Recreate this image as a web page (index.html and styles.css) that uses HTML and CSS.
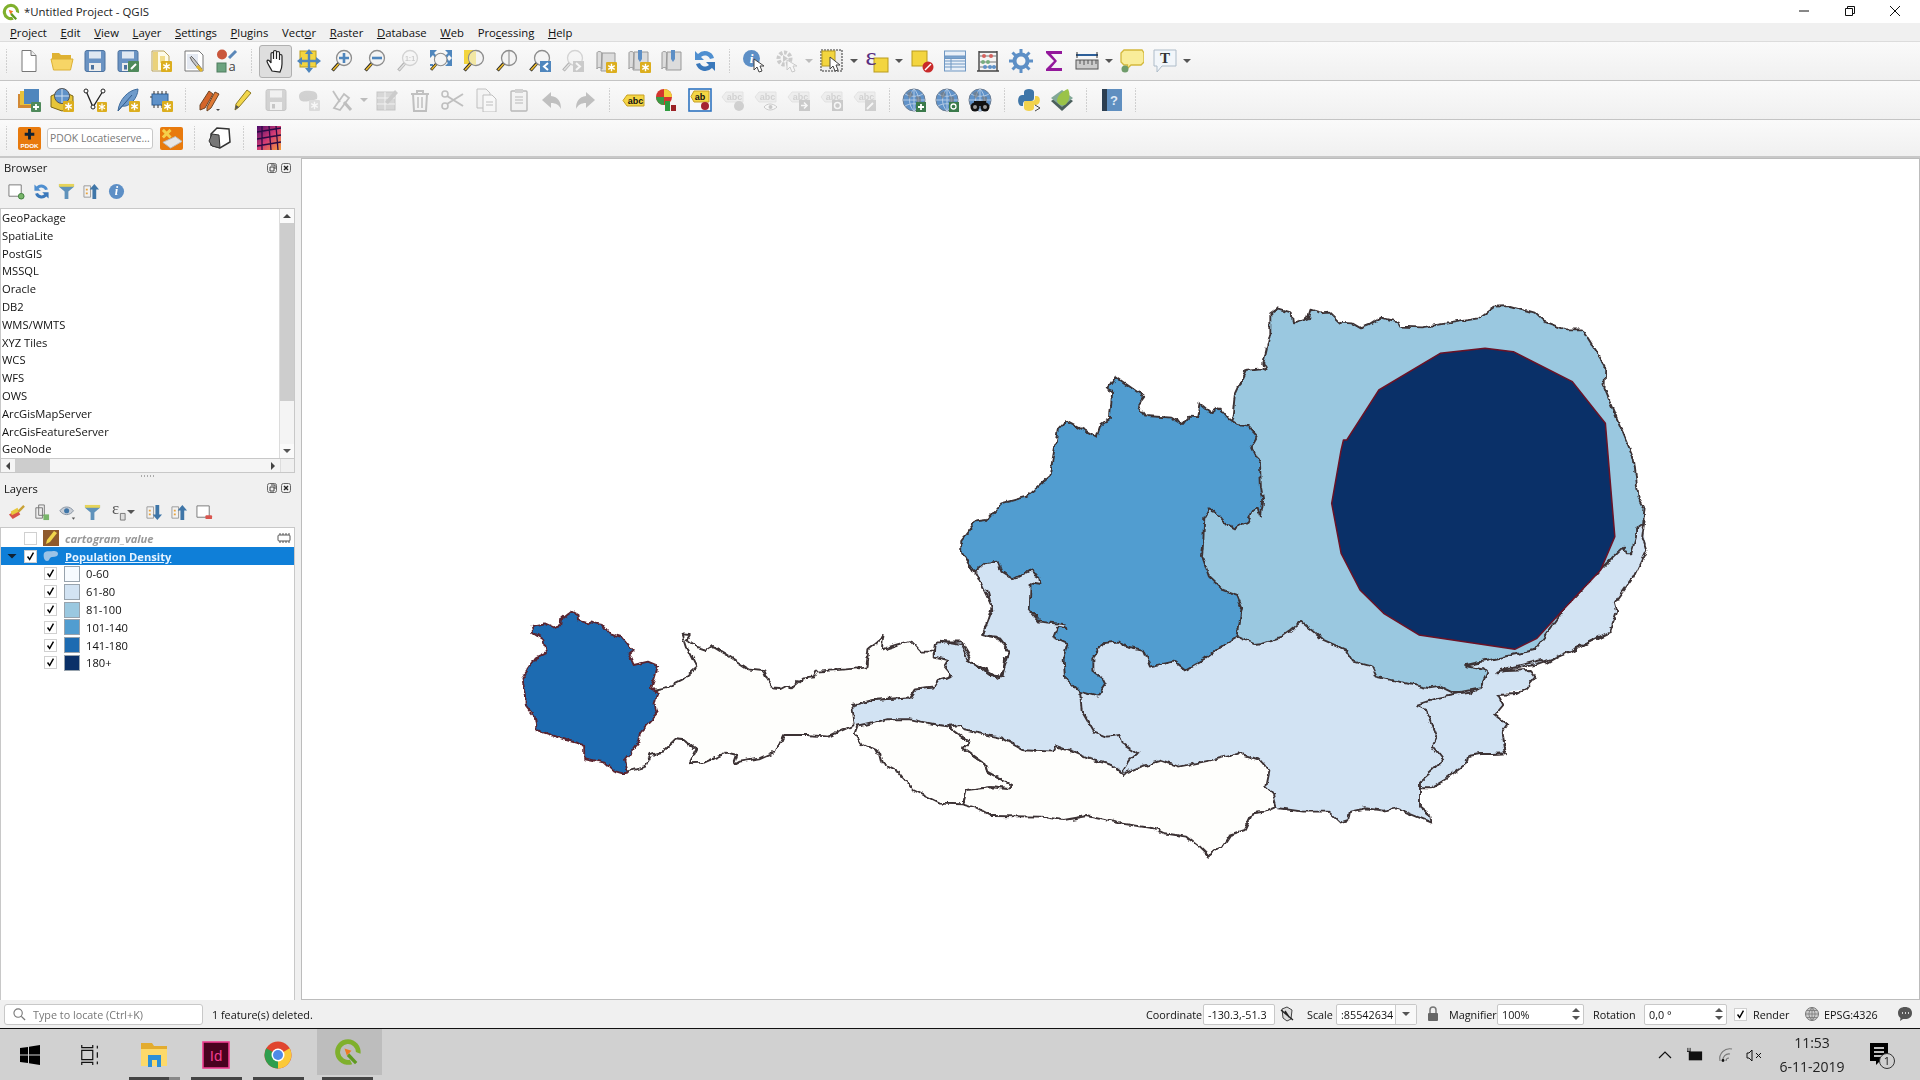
FILE: index.html
```html
<!DOCTYPE html>
<html lang="en">
<head>
<meta charset="utf-8">
<title>*Untitled Project - QGIS</title>
<link rel="stylesheet" href="styles.css">
</head>
<body>
<svg class="defs" xmlns="http://www.w3.org/2000/svg">
  <symbol id="star" viewBox="0 0 10 10"><rect width="10" height="10" rx="1" fill="#dcae1e"/><path d="M5 1.5v7M2 3.2l6 3.6M8 3.2l-6 3.6" stroke="#fff" stroke-width="1.3"/></symbol>
  <symbol id="mag" viewBox="0 0 24 24"><path d="M9 14 2.5 21.5" stroke="#222" stroke-width="3.4"/><path d="M8.5 15 3 21" stroke="#e9b82d" stroke-width="1.8"/><circle cx="14" cy="9" r="7.5" fill="#f4f4f4" stroke="#8d8d8d" stroke-width="1.3"/></symbol>
  <symbol id="qgis" viewBox="0 0 24 24"><path d="M12 1a11 11 0 1 0 3.600 21.400l-2-3.800A6.800 6.800 0 1 1 18.800 12l3.900 1.600A11 11 0 0 0 12 1z" fill="#7fb02c"/><path d="m13 13 7 7.500-2 2-7-7z" fill="#5f9a1f"/><path d="m9 9 6 2-4 4z" fill="#ee7a22"/></symbol>
  <symbol id="save" viewBox="0 0 24 24"><rect x="2" y="1.5" width="20" height="21" rx="2" fill="#6a93c3" stroke="#4d739f"/><rect x="6" y="2.5" width="12" height="7" fill="#dfe8f2"/><rect x="6" y="14" width="12" height="8" fill="#ececec"/><rect x="8" y="16" width="3" height="4.5" fill="#4d739f"/></symbol>
  <symbol id="hicon" viewBox="0 0 24 24"><path d="M8 22C6 18 3 14 3 12c1-2 3 0 4 2V5c0-2 2.500-2 2.500 0v5-7c0-2 3-2 3 0v7-6c0-2 3-2 3 0v7-4c0-2 2.500-2 2.500 0v8c0 4-1 6-2 8z" fill="#fff" stroke="#222" stroke-width="1.200"/></symbol>
  <symbol id="abc" viewBox="0 0 24 24"><path d="M5 7h17v11H5l-4-5.500z" fill="#f4d645" stroke="#c79f24"/><text x="13.500" y="16" class="abc">abc</text></symbol>
  <symbol id="abg" viewBox="0 0 24 24"><path d="M5 4h17v10H5l-4-5z" fill="#ddd" stroke="#bbb"/><text x="13.500" y="12" class="abc agr">abc</text></symbol>
  <symbol id="globe" viewBox="0 0 24 24"><circle cx="12" cy="12" r="11" fill="#5f92c9" stroke="#6c7d92"/><path d="M12 1v22M1 12h22M3 6c5 3 13 3 18 0M3 18c5-3 13-3 18 0M12 1c-6 6-6 16 0 22M12 1c6 6 6 16 0 22" fill="none" stroke="#b9cee6" stroke-width=".9"/><path d="M5 5l4-2 2 4-4 4zM14 8l5 1v5l-4 2z" fill="#777" opacity=".6"/></symbol>
  <symbol id="chk" viewBox="0 0 13 13"><path d="m3 6.500 2.500 3.500 4.500-8" fill="none" stroke="#000" stroke-width="1.700"/></symbol>
  <symbol id="arr" viewBox="0 0 8 6"><path d="M0 1h8L4 5z" fill="#555"/></symbol>
</svg>

<header class="title">
  <svg class="logo"><use href="#qgis"/></svg>
  <span>*Untitled Project - QGIS</span>
  <div class="winbtns">
    <svg class="wb" viewBox="0 0 12 12"><path d="M1 6h10" stroke="#111"/></svg>
    <svg class="wb" viewBox="0 0 12 12"><path d="M3.500 3V1.500h7v7H9M1.500 3.500h7v7h-7z" fill="none" stroke="#111"/></svg>
    <svg class="wb" viewBox="0 0 12 12"><path d="m1 1 10 10M11 1 1 11" stroke="#111"/></svg>
  </div>
</header>

<nav class="menu">
  <span><u>P</u>roject</span><span><u>E</u>dit</span><span><u>V</u>iew</span><span><u>L</u>ayer</span><span><u>S</u>ettings</span><span><u>P</u>lugins</span><span>Vect<u>o</u>r</span><span><u>R</u>aster</span><span><u>D</u>atabase</span><span><u>W</u>eb</span><span>Pro<u>c</u>essing</span><span><u>H</u>elp</span>
</nav>

<div class="tb">
  <i class="h h0"></i>
  <b class="b"><svg class="i" viewBox="0 0 24 24"><path d="M5 1.500h9l5 5v16H5z" fill="#fff" stroke="#777"/><path d="M14 1.500v5h5" fill="#eee" stroke="#777"/></svg></b>
  <b class="b"><svg class="i" viewBox="0 0 24 24"><path d="M2 4h7l2 2h10v5H2z" fill="#dfb233"/><path d="M1 10h22l-2.500 11h-17z" fill="#f7d566" stroke="#dcb034"/></svg></b>
  <b class="b"><svg class="i"><use href="#save"/></svg></b>
  <b class="b"><svg class="i" viewBox="0 0 24 24"><use href="#save"/><rect x="12" y="12" width="11" height="11" rx="1" fill="#4f8a5b"/><path d="m15 20 5-5" stroke="#fff" stroke-width="2"/></svg></b>
  <b class="b"><svg class="i" viewBox="0 0 24 24"><path d="M3 2h12l5 5v15H3z" fill="#fdfbe9" stroke="#b9a25a"/><path d="M4 3h5v18H4z" fill="#ead27a"/><path d="M11 7h5v7h-5z" fill="#f2dd8b"/><use href="#star" x="12" y="12" width="11" height="11"/></svg></b>
  <b class="b"><svg class="i" viewBox="0 0 24 24"><path d="M3 2h14l4 4v16H3z" fill="#fff" stroke="#777"/><path d="M5 5h11v15H5z" fill="#e4e9f2"/><path d="m9 7 3 3 8 10-2 2-8-10-2-4" fill="#c9c9c9" stroke="#666"/><path d="m15 17 5 5" stroke="#e3b72a" stroke-width="3"/></svg></b>
  <b class="b"><svg class="i vis" viewBox="0 0 24 24"><circle cx="7" cy="5.500" r="5" fill="#c9563b"/><path d="m14 9 7-7" stroke="#5b87b8" stroke-width="3"/><rect x="2" y="14" width="9" height="9" fill="#6ca37f" stroke="#4f7d5f"/><text x="17" y="22" class="stya">a</text></svg></b>
  <i class="h"></i>
  <b class="b act"><svg class="i"><use href="#hicon"/></svg></b>
  <b class="b"><svg class="i" viewBox="0 0 24 24"><rect x="3" y="2" width="16" height="16" fill="#f3d53f" stroke="#b99b1f"/><path d="m12 0 4 5H8zM12 24l-4-5h8zM0 12l5-4v8zM24 12l-5 4V8z" fill="#4f86bd"/><path d="M12 4v16M4 12h16" stroke="#4f86bd" stroke-width="2.400"/></svg></b>
  <b class="b"><svg class="i" viewBox="0 0 24 24"><use href="#mag"/><path d="M14 4v10M9 9h10" stroke="#4f86bd" stroke-width="2.600"/></svg></b>
  <b class="b"><svg class="i" viewBox="0 0 24 24"><use href="#mag"/><path d="M9 9h10" stroke="#4f86bd" stroke-width="2.600"/></svg></b>
  <b class="b dis"><svg class="i" viewBox="0 0 24 24"><use href="#mag"/><text x="14" y="12" class="one">1:1</text></svg></b>
  <b class="b"><svg class="i" viewBox="0 0 24 24"><path d="M1 1h7L5 4l3 3-2 2-2-3-3 3zM23 1h-7l3 3-3 3 2 2 2-3 3 3zM23 17h-7l3-3-3-3 2-2 2 3 3-3z" fill="#4f86bd"/><path d="M1 16h3" stroke="#4f86bd" stroke-width="2"/><use href="#mag" x="0" y="3" width="20" height="20"/></svg></b>
  <b class="b"><svg class="i" viewBox="0 0 24 24"><rect x="2" y="1" width="11" height="14" fill="#f3d53f"/><use href="#mag"/><path d="M14 2a7 7 0 0 0 0 14z" fill="#f2e7a4"/></svg></b>
  <b class="b"><svg class="i" viewBox="0 0 24 24"><use href="#mag"/><path d="M14 1.500v15" stroke="#888"/></svg></b>
  <b class="b"><svg class="i" viewBox="0 0 24 24"><use href="#mag"/><rect x="12" y="12" width="11" height="11" fill="#4f86bd"/><path d="m20 14-4 3.500 4 3.500" fill="none" stroke="#fff" stroke-width="2"/></svg></b>
  <b class="b dis"><svg class="i" viewBox="0 0 24 24"><use href="#mag"/><rect x="12" y="12" width="11" height="11" fill="#777"/><path d="m15 14 4 3.500-4 3.500" fill="none" stroke="#fff" stroke-width="2"/></svg></b>
  <b class="b"><svg class="i" viewBox="0 0 24 24"><path d="M3 4c0-2 4-2 5 0v16c-1-2-5-2-5 0zM8 4h13v18H7z" fill="#dcdcdc" stroke="#999"/><use href="#star" x="12" y="13" width="11" height="11"/></svg></b>
  <b class="b"><svg class="i" viewBox="0 0 24 24"><path d="M2 4c0-2 4-2 5 0v16c-1-2-5-2-5 0zM7 3h14v18H6z" fill="#dcdcdc" stroke="#999"/><path d="M11 1h4v9l-2 3-2-3z" fill="#5d8fc6"/><use href="#star" x="13" y="13" width="11" height="11"/></svg></b>
  <b class="b"><svg class="i" viewBox="0 0 24 24"><path d="M2 4c0-2 4-2 5 0v16c-1-2-5-2-5 0zM7 3h14v18H6z" fill="#dcdcdc" stroke="#999"/><path d="M11 1h4v9l-2 3-2-3z" fill="#5d8fc6"/></svg></b>
  <b class="b"><svg class="i" viewBox="0 0 24 24"><path d="M21 9a9.500 9.500 0 0 0-16-4L2 2v9h9L8 8a5.500 5.500 0 0 1 9 2z" fill="#4f8fd0"/><path d="M3 15a9.500 9.500 0 0 0 16 4l3 3v-9h-9l3 3a5.500 5.500 0 0 1-9-2z" fill="#3a78bb"/></svg></b>
  <i class="h"></i>
  <b class="b"><svg class="i" viewBox="0 0 24 24"><circle cx="9.500" cy="9.500" r="8.500" fill="#5d8fc6"/><text x="9.500" y="14" class="info">i</text><path d="m12 10 0 11 3-3 2 5 3-1-2-5h4z" fill="#fff" stroke="#444"/></svg></b>
  <b class="b dis"><svg class="i" viewBox="0 0 24 24"><circle cx="9.500" cy="9.500" r="6" fill="none" stroke="#777" stroke-width="4" stroke-dasharray="3 1.500"/><path d="m8 6 5 3.500-5 3.500z" fill="#777"/><path d="m12 11 0 10 3-3 2 5 3-1-2-5h4z" fill="#fff" stroke="#777"/></svg></b>
  <b class="ar"><svg class="a dim"><use href="#arr"/></svg></b>
  <b class="b"><svg class="i" viewBox="0 0 24 24"><rect x="1" y="1" width="21" height="21" fill="#eee" stroke="#333" stroke-dasharray="2 1"/><rect x="2" y="2" width="13" height="15" fill="#f3d53f" stroke="#b99b1f"/><path d="m10 8 0 12 3-3 2 5 3-1-2-5h4z" fill="#fff" stroke="#444"/></svg></b>
  <b class="ar"><svg class="a"><use href="#arr"/></svg></b>
  <b class="b"><svg class="i vis" viewBox="0 0 24 24"><rect x="9" y="9" width="14" height="14" fill="#f3d53f" stroke="#b99b1f"/><text x="6" y="16" class="eps">ε</text></svg></b>
  <b class="ar"><svg class="a"><use href="#arr"/></svg></b>
  <b class="b"><svg class="i" viewBox="0 0 24 24"><rect x="2" y="2" width="15" height="15" fill="#f3d53f" stroke="#b99b1f"/><circle cx="18" cy="18" r="5.500" fill="#c92a2a"/><path d="m15 21 6-6" stroke="#fff" stroke-width="1.500"/></svg></b>
  <b class="b"><svg class="i" viewBox="0 0 24 24"><rect x="1.500" y="2" width="21" height="20" fill="#e9f0f8" stroke="#6f97c2"/><path d="M2 7h20v2.500H2zM2 12h20M2 15h20M2 18h20M8 9v12" stroke="#6f97c2" fill="#7aa3cf"/></svg></b>
  <b class="b"><svg class="i" viewBox="0 0 24 24"><path d="M3 2v20M21 2v20M1 22h22M3 3h18" stroke="#444" stroke-width="1.400"/><path d="M3 7h18M3 13h18M3 18h18" stroke="#777"/><g fill="#d6625e"><circle cx="8" cy="7" r="2"/><circle cx="15" cy="7" r="2"/></g><g fill="#76ad7f"><circle cx="7" cy="13" r="2"/><circle cx="12" cy="13" r="2"/></g><g fill="#5f92c9"><circle cx="9" cy="18" r="2"/><circle cx="14" cy="18" r="2"/><circle cx="18" cy="18" r="2"/></g></svg></b>
  <b class="b"><svg class="i" viewBox="0 0 24 24"><circle cx="12" cy="12" r="6.500" fill="none" stroke="#5d8fc6" stroke-width="4"/><path d="M12 0v5M12 19v5M0 12h5M19 12h5M3.500 3.500l4 4M16.500 16.500l4 4M20.500 3.500l-4 4M7.500 16.500l-4 4" stroke="#5d8fc6" stroke-width="3"/></svg></b>
  <b class="b"><svg class="i" viewBox="0 0 24 24"><path d="M20 5V2H4v2l8 8-8 8v2h16v-3H9l6-7-6-7z" fill="#93189b"/></svg></b>
  <b class="b"><svg class="i" viewBox="0 0 24 24"><path d="M1 6h22" stroke="#2d5f99" stroke-width="2"/><path d="M2 3v6M22 3v6" stroke="#333"/><rect x="1" y="11" width="22" height="9" fill="#ccc" stroke="#555"/><path d="M5 11v4M9 11v5M13 11v4M17 11v5M21 11v4" stroke="#555"/></svg></b>
  <b class="ar"><svg class="a"><use href="#arr"/></svg></b>
  <b class="b"><svg class="i" viewBox="0 0 24 24"><path d="M4 1h18l2 3v9l-3 3H11l-4 4 .5-4H4l-3-3V4z" fill="#f9ed9a" stroke="#d3b83c" stroke-width="1.300"/><circle cx="5" cy="20" r="3.500" fill="#6f9c6b"/></svg></b>
  <b class="b"><svg class="i" viewBox="0 0 24 24"><path d="M1 1h22v16H9l-5 6v-6H1z" fill="#f2f6fa" stroke="#aebcc9"/><text x="12" y="14" class="tt">T</text></svg></b>
  <b class="ar"><svg class="a"><use href="#arr"/></svg></b>
</div>

<div class="tb">
  <i class="h h0"></i>
  <b class="b"><svg class="i" viewBox="0 0 24 24"><path d="M1 6h13v14H1z" fill="#d28934"/><path d="M3 3h13v14H3z" fill="#e8c23a"/><rect x="7" y="1" width="15" height="15" fill="#4f86bd"/><rect x="14" y="14" width="10" height="10" rx="1" fill="#4f8a5b"/><path d="M19 16v6M16 19h6" stroke="#fff" stroke-width="1.800"/></svg></b>
  <b class="b"><svg class="i" viewBox="0 0 24 24"><path d="M1 8 12 3l11 5v11l-11 4-11-4z" fill="#e6c538" stroke="#7a6515"/><circle cx="12" cy="8" r="7.500" fill="#5f92c9" stroke="#555"/><path d="M5 8h14M12 1v14" stroke="#cfe0f2"/><use href="#star" x="13" y="13" width="11" height="11"/></svg></b>
  <b class="b"><svg class="i" viewBox="0 0 24 24"><path d="M3 3 10 19 20 3" fill="none" stroke="#222" stroke-width="1.300"/><g fill="#fff" stroke="#222"><circle cx="3" cy="3" r="2"/><circle cx="10" cy="19" r="2"/><circle cx="20" cy="3" r="2"/></g><use href="#star" x="14" y="14" width="10" height="10"/></svg></b>
  <b class="b"><svg class="i" viewBox="0 0 24 24"><path d="M2 23C3 12 12 2 22 1c0 9-9 19-16 17z" fill="#6f9bcb" stroke="#3f6c9d"/><path d="M2 23 16 7" stroke="#345d8b"/><use href="#star" x="13" y="13" width="11" height="11"/></svg></b>
  <b class="b"><svg class="i" viewBox="0 0 24 24"><rect x="3" y="6" width="16" height="11" fill="#5f92c9" stroke="#2f5f94"/><path d="M5 3v3M9 3v3M13 3v3M17 3v3M5 17v3M9 17v3M13 17v3M1 9h2" stroke="#333"/><use href="#star" x="13" y="13" width="11" height="11"/></svg></b>
  <i class="h"></i>
  <b class="b"><svg class="i" viewBox="0 0 24 24"><path d="m2 17 9-14 4 3-8 14-5 2z" fill="#d4652a" stroke="#6f4626"/><path d="m9 19 8-15 4 2-8 14-4 3z" fill="#e07a35" stroke="#6f4626"/><path d="m18 21h4l-2 2z" fill="#444"/></svg></b>
  <b class="b"><svg class="i" viewBox="0 0 24 24"><path d="m4 22 1-6L16 2l4 3L8 19z" fill="#f2d64a" stroke="#8f7b23"/><path d="m4 22 1-5 3 2z" fill="#555"/></svg></b>
  <b class="b dis"><svg class="i"><use href="#save"/></svg></b>
  <b class="b dis"><svg class="i" viewBox="0 0 24 24"><path d="M2 8c0-5 7-6 12-5 6 0 7 4 6 8l-6 2c-4 0-12 3-12-5z" fill="#888"/><use href="#star" x="12" y="12" width="11" height="11"/></svg></b>
  <b class="b dis"><svg class="i" viewBox="0 0 24 24"><path d="M3 3 10 14M4 20 14 6l5 4-9 12z" fill="none" stroke="#555" stroke-width="1.800"/><path d="m14 14 7 8" stroke="#555" stroke-width="3"/></svg></b>
  <b class="ar"><svg class="a dim"><use href="#arr"/></svg></b>
  <b class="b dis"><svg class="i" viewBox="0 0 24 24"><rect x="2" y="4" width="18" height="18" fill="#999" stroke="#666"/><path d="M2 10h18M2 16h18M10 4v18" stroke="#eee"/><path d="m10 14 10-12 3 3-10 11z" fill="#777"/></svg></b>
  <b class="b dis"><svg class="i" viewBox="0 0 24 24"><path d="M3 6h18M9 6V3h6v3M5 6l1 17h12l1-17" fill="none" stroke="#804d40" stroke-width="2"/><path d="M10 9v11M14 9v11" stroke="#804d40" stroke-width="1.500"/></svg></b>
  <b class="b dis"><svg class="i" viewBox="0 0 24 24"><circle cx="4" cy="6" r="3" fill="none" stroke="#555" stroke-width="1.600"/><circle cx="4" cy="18" r="3" fill="none" stroke="#555" stroke-width="1.600"/><path d="m6 8 16 10M6 16 22 6" stroke="#555" stroke-width="2"/></svg></b>
  <b class="b dis"><svg class="i" viewBox="0 0 24 24"><path d="M3 1h9l4 4v15H3z" fill="#eee" stroke="#555"/><path d="M9 7h9l4 4v13H9z" fill="#fff" stroke="#555"/><path d="M12 14h7M12 17h7" stroke="#555"/></svg></b>
  <b class="b dis"><svg class="i" viewBox="0 0 24 24"><rect x="4" y="3" width="16" height="20" rx="1" fill="#eee" stroke="#444" stroke-width="1.400"/><rect x="8" y="1" width="8" height="4" fill="#888"/><path d="M8 9h8M8 12h8M8 15h8" stroke="#444"/></svg></b>
  <b class="b dis"><svg class="i" viewBox="0 0 24 24"><path d="M11 4 2 12l9 8v-5c5 0 8 2 10 6 0-8-3-12-10-13z" fill="#555"/></svg></b>
  <b class="b dis"><svg class="i" viewBox="0 0 24 24"><path d="m13 4 9 8-9 8v-5c-5 0-8 2-10 6 0-8 3-12 10-13z" fill="#555"/></svg></b>
  <i class="h"></i>
  <b class="b"><svg class="i"><use href="#abc"/></svg></b>
  <b class="b"><svg class="i" viewBox="0 0 24 24"><circle cx="9" cy="9" r="8" fill="#d4362f"/><path d="M9 9V1a8 8 0 0 1 8 8z" fill="#f2d13b"/><path d="M9 9H1a8 8 0 0 0 8 8z" fill="#3b9a45"/><rect x="10" y="13" width="5" height="10" fill="#2f9b3f"/><rect x="16" y="17" width="5" height="6" fill="#9b2226"/></svg></b>
  <b class="b"><svg class="i" viewBox="0 0 24 24"><rect x="1" y="1" width="22" height="22" fill="#f8f8f8" stroke="#2f74c0" stroke-width="1.600"/><path d="M6 3h15v11H6l-3-5.500z" fill="#f4d645" stroke="#c79f24"/><text x="12" y="12" class="abc">ab</text><circle cx="17" cy="18" r="4" fill="#a52330"/></svg></b>
  <b class="b dis"><svg class="i" viewBox="0 0 24 24"><use href="#abg"/><circle cx="18" cy="18" r="5" fill="#888"/></svg></b>
  <b class="b dis"><svg class="i" viewBox="0 0 24 24"><use href="#abg"/><path d="M10 19c3-4 9-4 13 0-4 4-10 4-13 0z" fill="#fff" stroke="#777"/><circle cx="16.500" cy="19" r="2" fill="#777"/></svg></b>
  <b class="b dis"><svg class="i" viewBox="0 0 24 24"><use href="#abg"/><rect x="12" y="12" width="11" height="11" fill="#777"/><path d="M14 17.500h5M17 14.500l3 3-3 3" fill="none" stroke="#fff" stroke-width="1.500"/></svg></b>
  <b class="b dis"><svg class="i" viewBox="0 0 24 24"><use href="#abg"/><rect x="12" y="12" width="11" height="11" fill="#777"/><circle cx="17.500" cy="17.500" r="3" fill="none" stroke="#fff" stroke-width="1.500"/></svg></b>
  <b class="b dis"><svg class="i" viewBox="0 0 24 24"><use href="#abg"/><rect x="12" y="12" width="11" height="11" fill="#888"/><path d="m14 21 6-6" stroke="#fff" stroke-width="1.800"/></svg></b>
  <i class="h"></i>
  <b class="b"><svg class="i" viewBox="0 0 24 24"><use href="#globe"/><rect x="14" y="14" width="10" height="10" fill="#3b7a4b"/><path d="M19 16v6M16 19h6" stroke="#fff" stroke-width="1.800"/></svg></b>
  <b class="b"><svg class="i" viewBox="0 0 24 24"><use href="#globe"/><rect x="14" y="14" width="10" height="10" fill="#3b7a4b"/><circle cx="18.500" cy="18.500" r="2.500" fill="none" stroke="#fff" stroke-width="1.300"/></svg></b>
  <b class="b"><svg class="i" viewBox="0 0 24 24"><use href="#globe"/><circle cx="7" cy="19" r="4.500" fill="#111"/><circle cx="17" cy="19" r="4.500" fill="#111"/><rect x="6" y="13" width="12" height="5" fill="#111"/><circle cx="7" cy="19" r="2" fill="#999"/><circle cx="17" cy="19" r="2" fill="#999"/></svg></b>
  <i class="h"></i>
  <b class="b"><svg class="i" viewBox="0 0 24 24"><path d="M7 7V4c0-4 10-4 10 0v6c0 2-1 3-3 3H9c-2 0-3 1-3 3v2H4c-4-1-4-11 1-11z" fill="#3f76a8"/><path d="M17 17v3c0 4-10 4-10 0v-5c0-2 1-2 3-2h5c2 0 3-1 3-3V8h2c4 0 4 9-1 9z" fill="#f2d24c"/><path d="m18 17 5 3-5 3" fill="none" stroke="#444"/></svg></b>
  <b class="b"><svg class="i" viewBox="0 0 24 24"><path d="M1 13 12 6l11 7-11 10z" fill="#4b5f5c"/><path d="M1 10 12 2l11 8-11 9z" fill="#82a898"/><path d="M7 13c0-6 6-10 11-12 3 6 1 13-3 16-3 1-7 0-8-4z" fill="#9ac348"/></svg></b>
  <i class="h"></i>
  <b class="b"><svg class="i" viewBox="0 0 24 24"><rect x="3" y="1" width="20" height="22" fill="#5f8fc0"/><rect x="3" y="1" width="5" height="22" fill="#2c3e50"/><text x="15" y="17" class="help">?</text></svg></b>
  <i class="h"></i>
</div>

<div class="tb tb3">
  <i class="h h0"></i>
  <b class="oi"><svg class="oic" viewBox="0 0 24 24"><path d="M12 2v11M7 7.500h10" stroke="#123" stroke-width="3"/><text x="12" y="21.500" class="pdok">PDOK</text></svg></b>
  <span class="pdokin">PDOK Locatieserve...</span>
  <b class="oi oi2"><svg class="oic" viewBox="0 0 24 24"><path d="M3 16 16 10l7 5-12 7z" fill="#e6e6e6" stroke="#bbb"/><path d="m3 3 8 8M11 3 3 11" stroke="#f5d04a" stroke-width="3"/></svg></b>
  <i class="h h3"></i>
  <b class="b"><svg class="i" viewBox="0 0 24 24"><path d="m4 8 6-6 12 1 1 13-10 6-9-3z" fill="#fff" stroke="#333" stroke-width="1.500"/><path d="M2 15 5 8l7 1 1 13-8-2z" fill="#777" stroke="#333"/></svg></b>
  <i class="h h3b"></i>
  <svg class="rast" viewBox="0 0 24 24"><defs><linearGradient id="rg" x1="0" y1="0" x2="1" y2="1"><stop offset="0" stop-color="#4b0a6b"/><stop offset=".5" stop-color="#d33a75"/><stop offset="1" stop-color="#f6a03a"/></linearGradient></defs><rect width="24" height="24" fill="url(#rg)"/><path d="M0 6 24 2M0 13l24-4M0 20l24-4M5 0v24M12 0l2 24M19 0l2 24" stroke="#2a0b45" stroke-width="1.300"/></svg>
</div>

<main class="main">
  <aside class="dock">
    <div class="dh"><span>Browser</span><span class="dbtns"><svg class="db" viewBox="0 0 10 10"><rect x=".5" y=".5" width="9" height="9" rx="2" fill="none" stroke="#666"/><path d="M3 4h4v4H3zM4 2h4v4" fill="none" stroke="#444"/></svg><svg class="db" viewBox="0 0 10 10"><rect x=".5" y=".5" width="9" height="9" rx="2" fill="none" stroke="#666"/><path d="m3 3 4 4M7 3 3 7" stroke="#222" stroke-width="1.400"/></svg></span></div>
    <div class="dt">
      <svg class="di" viewBox="0 0 18 18"><path d="M1 2h13v12H1z" fill="#fff" stroke="#777"/><circle cx="14" cy="14" r="3" fill="#78b56a" stroke="#3e7d3c"/></svg>
      <svg class="di" viewBox="0 0 24 24"><path d="M21 9a9.500 9.500 0 0 0-16-4L2 2v9h9L8 8a5.500 5.500 0 0 1 9 2z" fill="#4f8fd0"/><path d="M3 15a9.500 9.500 0 0 0 16 4l3 3v-9h-9l3 3a5.500 5.500 0 0 1-9-2z" fill="#3a78bb"/></svg>
      <svg class="di" viewBox="0 0 18 18"><path d="M1 1h16v3l-6 5v8H7V9L1 4z" fill="#5f92bb"/><path d="M1 1h16v3H1z" fill="#e6d45a"/></svg>
      <svg class="di" viewBox="0 0 18 18"><path d="M1 3h7v12H1z" fill="#f2f2f2" stroke="#999"/><path d="M3 6h2v2H3zM3 10h2v2H3z" fill="#e8a23a"/><path d="M12 1 17 7h-3v10h-4V7H7z" fill="#3f76a8"/></svg>
      <svg class="di" viewBox="0 0 18 18"><circle cx="9" cy="9" r="8" fill="#5d8fc6"/><text x="9" y="13" class="info inf2">i</text></svg>
    </div>
    <div class="list">
      <div class="rows">
        <div class="r">GeoPackage</div><div class="r">SpatiaLite</div><div class="r">PostGIS</div><div class="r">MSSQL</div><div class="r">Oracle</div><div class="r">DB2</div><div class="r">WMS/WMTS</div><div class="r">XYZ Tiles</div><div class="r">WCS</div><div class="r">WFS</div><div class="r">OWS</div><div class="r">ArcGisMapServer</div><div class="r">ArcGisFeatureServer</div><div class="r">GeoNode</div>
      </div>
      <div class="vs"><i class="sb sa"><svg class="a" viewBox="0 0 8 6"><path d="M0 5h8L4 1z" fill="#444"/></svg></i><i class="thumb"></i><i class="track"></i><i class="sb"><svg class="a"><use href="#arr"/></svg></i></div>
    </div>
    <div class="hs"><i class="sb2"><svg class="a2" viewBox="0 0 6 8"><path d="M5 0v8L1 4z" fill="#444"/></svg></i><i class="hthumb"></i><i class="htrack"></i><i class="sb2"><svg class="a2" viewBox="0 0 6 8"><path d="M1 0v8l4-4z" fill="#444"/></svg></i><i class="corner"></i></div>
    <div class="split"><i class="gr"></i></div>
    <div class="dh dh2"><span>Layers</span><span class="dbtns"><svg class="db" viewBox="0 0 10 10"><rect x=".5" y=".5" width="9" height="9" rx="2" fill="none" stroke="#666"/><path d="M3 4h4v4H3zM4 2h4v4" fill="none" stroke="#444"/></svg><svg class="db" viewBox="0 0 10 10"><rect x=".5" y=".5" width="9" height="9" rx="2" fill="none" stroke="#666"/><path d="m3 3 4 4M7 3 3 7" stroke="#222" stroke-width="1.400"/></svg></span></div>
    <div class="dt dt2">
      <svg class="di" viewBox="0 0 18 18"><path d="m1 11 9-5 3 5-8 5z" fill="#d8524a"/><path d="m3 8 7-4 2 4-8 4z" fill="#e9c93e"/><path d="m11 8 6-6" stroke="#c9a236" stroke-width="2.500"/></svg>
      <svg class="di" viewBox="0 0 18 18"><path d="M3 4h7v11H3zM6 1h6v11H6z" fill="#eee" stroke="#777"/><rect x="11" y="11" width="6" height="6" fill="#78b56a"/></svg>
      <svg class="di" viewBox="0 0 20 18"><path d="M1 7c4-6 12-6 16 0-4 6-12 6-16 0z" fill="#c9ced6" stroke="#7d8a99"/><circle cx="9" cy="7" r="3" fill="#3f76a8"/><path d="m15 15 4 0-2 2.500z" fill="#555"/></svg>
      <svg class="di" viewBox="0 0 18 18"><path d="M1 1h16v3l-6 5v8H7V9L1 4z" fill="#5f92bb"/><path d="M1 1h16v3H1z" fill="#e6d45a"/></svg>
      <span class="dex"><svg class="di vis" viewBox="0 0 18 18"><text x="6" y="11" class="eps eps2">ε</text><path d="M11 10h5v7h-5z" fill="#ddd" stroke="#777"/></svg><svg class="a"><use href="#arr"/></svg></span>
      <svg class="di" viewBox="0 0 18 18"><path d="M1 3h7v12H1z" fill="#f2f2f2" stroke="#999"/><path d="M3 6h2v2H3zM3 10h2v2H3z" fill="#e8a23a"/><path d="M12 17 17 11h-3V1h-4v10H7z" fill="#3f76a8"/></svg>
      <svg class="di" viewBox="0 0 18 18"><path d="M1 3h7v12H1z" fill="#f2f2f2" stroke="#999"/><path d="M3 6h2v2H3zM3 10h2v2H3z" fill="#e8a23a"/><path d="M12 1 17 7h-3v10h-4V7H7z" fill="#3f76a8"/></svg>
      <svg class="di" viewBox="0 0 18 18"><path d="M1 2h13v12H1z" fill="#fff" stroke="#777"/><rect x="10" y="12" width="7" height="4" rx="1" fill="#d9564f"/></svg>
    </div>
    <div class="tree">
      <div class="tr top dimrow"><i class="tw"></i><i class="cb"></i><svg class="li" viewBox="0 0 16 16"><rect width="16" height="16" fill="#8f5a2c"/><path d="m3 14 1-4 7-9 3 2-7 9z" fill="#f1d64b"/></svg><span class="nm">cartogram_value</span><svg class="chip" viewBox="0 0 14 10"><rect x="1" y="2" width="12" height="6" rx="1" fill="#fff" stroke="#555"/><path d="M3 0v2M6 0v2M9 0v2M12 0v2M3 8v2M6 8v2M9 8v2M12 8v2" stroke="#555"/></svg></div>
      <div class="tr top sel"><svg class="tw" viewBox="0 0 14 14"><path d="M2 5h9L6.500 9.500z" fill="#123"/></svg><i class="cb"><svg class="ck"><use href="#chk"/></svg></i><svg class="li" viewBox="0 0 16 16"><path d="M1 5c3-3 6-1 9-2 4 0 5 1 5 3s-2 3-6 3c-3 0-2 4-5 4S0 8 1 5z" fill="#9cc3e6"/></svg><span class="nm">Population Density</span></div>
      <div class="tr leg"><i class="cb"><svg class="ck"><use href="#chk"/></svg></i><i class="sw s1"></i><span>0-60</span></div>
      <div class="tr leg"><i class="cb"><svg class="ck"><use href="#chk"/></svg></i><i class="sw s2"></i><span>61-80</span></div>
      <div class="tr leg"><i class="cb"><svg class="ck"><use href="#chk"/></svg></i><i class="sw s3"></i><span>81-100</span></div>
      <div class="tr leg"><i class="cb"><svg class="ck"><use href="#chk"/></svg></i><i class="sw s4"></i><span>101-140</span></div>
      <div class="tr leg"><i class="cb"><svg class="ck"><use href="#chk"/></svg></i><i class="sw s5"></i><span>141-180</span></div>
      <div class="tr leg"><i class="cb"><svg class="ck"><use href="#chk"/></svg></i><i class="sw s6"></i><span>180+</span></div>
    </div>
  </aside>
  <section class="canvas">
    <svg class="map" viewBox="302 159 1617 840" preserveAspectRatio="none">
      <defs>
        <filter id="jag" x="0" y="0" width="1" height="1" filterUnits="objectBoundingBox" color-interpolation-filters="sRGB">
          <feTurbulence type="fractalNoise" baseFrequency=".11" numOctaves="3" seed="4" result="n"/>
          <feDisplacementMap in="SourceGraphic" in2="n" scale="6" xChannelSelector="R" yChannelSelector="G"/>
        </filter>
      </defs>
      <g class="jag">
        <rect x="302" y="159" width="1617" height="840" fill="none"/>
        <g transform="translate(500 590) scale(.5102 .3333)">
          <polygon class="f2" points="690,345 730,330 805,322 815,298 850,292 860,270 885,258 870,230 878,210 850,200 852,165 860,157 905,157 922,200 915,210 945,235 975,265 985,260 990,210 1000,185 980,145 945,135 965,60 955,0 1568,0 1568,655 1522,650 1000,500 695,405"/>
        </g>
        <g transform="translate(940 290) scale(.4719 .3333)">
          <polygon class="f2" points="75,848 110,950 90,1035 120,1040 148,1085 130,1160 105,1155 60,1110 45,1065 0,1055 0,1260 1185,1260 1185,1215 1240,1190 1262,1165 1250,1150 1180,1145 1260,1125 1320,1095 1420,1025 1435,965 1430,940 1470,860 1497,780 1488,700 1400,700 600,700 100,800"/>
          <polyline class="ln" points="75,848 110,950 90,1035 120,1040 148,1085 130,1160 105,1155 60,1110 45,1065 0,1055"/>
          <polyline class="ln" points="1180,1145 1260,1125 1320,1095 1420,1025 1435,965 1430,940 1470,860 1497,780 1488,740 1493,690"/>
        </g>
        <g transform="translate(1240 600) scale(.3333 .3333)">
          <polygon class="f2" points="770,217 870,210 887,233 860,265 775,285 790,315 765,345 802,375 785,400 795,460 685,468 680,490 620,535 570,565 540,565 540,620 570,645 575,668 470,625 430,632 375,625 330,635 325,660 300,668 265,635 190,635 115,625 0,500 0,100 600,100"/>
          <polyline class="ln" points="770,217 800,205 905,180 920,190 965,165 1000,150 1115,95"/>
          <polyline class="ln" points="770,217 800,213 870,210 887,233 860,265 830,282 775,285 790,315 765,345 802,375 785,400 795,460 760,462 720,462 685,468 680,490 620,535 570,565 540,565 540,620 570,645 575,668 470,625 430,632 375,625 330,635 325,660 300,668 265,635 190,635 115,625"/>
          <polyline class="ln" points="530,315 590,295 640,285 690,278 722,262"/>
          <polyline class="ln" points="530,315 560,330 590,405 575,435 610,480 580,510 540,545 540,565"/>
        </g>
        <g transform="translate(500 590) scale(.5102 .3333)">
          <polyline class="ln" points="690,345 730,330 805,322 815,298 850,292 860,270 885,258 870,230 878,210 850,200 852,165 860,157 905,157 922,200 915,210 945,235 975,265 985,260 990,210 1000,185 980,145 945,135 965,60 955,0"/>
          <polyline class="ln" points="1137,305 1140,360 1165,425 1190,440 1215,435 1220,460 1250,490 1235,510 1220,545"/>
          <polygon class="f1" points="358,133 372,135 366,150 385,170 405,180 416,168 440,190 485,235 515,240 520,260 535,295 550,297 565,285 572,295 595,265 615,262 620,245 680,238 718,232 722,178 745,150 752,135 748,178 775,165 805,152 825,185 850,185 850,200 878,210 870,230 885,258 860,270 850,292 815,298 805,322 730,330 690,345 695,405 665,425 645,440 600,435 555,435 540,485 510,505 470,515 458,525 465,495 445,488 400,518 372,520 385,480 360,450 345,448 320,485 295,495 285,530 250,545 245,510 300,300 330,290 358,268 385,232 368,180"/>
          <polygon class="f1" points="700,410 715,405 760,388 805,388 860,405 880,410 920,455 908,475 950,520 955,545 1002,585 995,597 960,592 915,600 908,640 860,638 810,600 780,545 750,520 745,490 710,465 695,430"/>
          <polygon class="f1" points="880,410 900,405 910,420 985,445 1025,478 1085,482 1090,468 1130,490 1160,510 1200,525 1222,552 1255,530 1295,512 1330,530 1390,512 1450,490 1490,510 1508,545 1502,590 1515,610 1522,650 1500,665 1475,670 1460,720 1430,735 1415,770 1390,800 1370,770 1345,740 1300,730 1280,715 1215,700 1150,678 1105,690 1060,680 965,678 930,650 908,640 915,600 960,592 995,597 1002,585 955,545 950,520 908,475 920,455"/>
          <polygon class="f5" points="140,62 152,72 153,92 172,100 178,94 200,102 215,130 240,142 260,180 252,190 262,225 290,215 310,228 303,265 297,290 308,310 303,345 308,372 275,425 268,465 245,510 250,548 240,550 222,542 205,518 165,505 165,465 130,450 72,420 68,380 50,345 50,325 42,268 70,205 90,190 85,150 65,130 62,108 88,100 105,112 120,105 122,85"/>
        </g>
        <g transform="translate(940 290) scale(.4719 .3333)">
          <polygon class="f3" points="700,70 715,55 745,68 748,100 780,85 785,62 805,70 825,68 845,95 870,97 892,115 910,105 935,83 970,95 975,110 1020,112 1100,95 1140,85 1175,50 1210,48 1260,68 1280,95 1325,118 1360,118 1385,175 1410,230 1408,295 1430,370 1470,505 1480,620 1493,655 1490,700 1475,715 1475,740 1465,790 1455,790 1450,770 1400,840 1330,945 1260,1080 1180,1105 1115,1125 1150,1135 1160,1150 1145,1195 1090,1210 1060,1190 1035,1195 925,1160 915,1130 875,1115 860,1080 810,1048 765,995 740,1025 725,1040 680,1060 665,1062 630,1040 640,950 530,900 530,650 620,380 625,310 648,240 680,235 690,240 685,220 700,130"/>
          <polygon class="f4" points="372,260 433,320 420,345 437,378 490,383 515,405 530,380 545,382 550,340 575,370 592,352 612,385 630,402 650,405 672,438 660,470 678,520 680,590 685,630 680,680 675,655 660,665 650,695 625,715 605,700 585,665 570,655 560,680 558,755 555,800 570,860 600,900 630,915 640,950 630,1040 590,1075 560,1110 520,1142 495,1115 445,1130 430,1080 385,1065 378,1055 345,1060 325,1100 325,1145 345,1165 352,1185 335,1220 295,1205 265,1165 262,1110 272,1060 240,1040 248,1010 268,1015 265,1003 210,995 190,960 192,880 215,885 212,860 190,842 155,868 130,845 122,815 95,820 72,848 45,785 45,750 75,695 100,690 130,640 185,620 232,560 250,420 268,392 332,440 340,405 360,385 365,305 355,298"/>
        </g>
      </g>
      <g transform="translate(940 290) scale(.4719 .3333)">
        <polygon class="f6" points="1060,190 1155,175 1215,185 1340,275 1410,400 1430,740 1400,840 1330,945 1265,1045 1218,1078 1015,1035 940,970 890,900 850,790 830,640 850,480 855,450 862,450 930,300"/>
      </g>
    </svg>
  </section>
</main>

<footer class="status">
  <div class="loc"><svg class="srch" viewBox="0 0 14 14"><circle cx="5.500" cy="5.500" r="4.500" fill="none" stroke="#777" stroke-width="1.200"/><path d="m9 9 4 4" stroke="#777" stroke-width="1.400"/></svg><span>Type to locate (Ctrl+K)</span></div>
  <span class="msg">1 feature(s) deleted.</span>
  <div class="sr">
    <span>Coordinate</span>
    <span class="inp">-130.3,-51.3</span>
    <svg class="sico sleft" viewBox="0 0 16 16"><path d="M3 3 8 1l5 3-1 9-4 2-4-3z" fill="#ddd" stroke="#444"/><path d="M2 4 14 14M6 5l4 6" stroke="#222" stroke-width="1.400"/></svg>
    <span>Scale</span>
    <span class="inp drop">:85542634<i class="dd"><svg class="a"><use href="#arr"/></svg></i></span>
    <svg class="sico" viewBox="0 0 16 16"><path d="M5 7V4a3 3 0 0 1 6 0v3" fill="none" stroke="#777" stroke-width="1.500"/><rect x="3" y="7" width="10" height="8" rx="1" fill="#666"/></svg>
    <span>Magnifier</span>
    <span class="inp drop">100%<i class="spin"><svg class="sp" viewBox="0 0 8 14"><path d="M0 5h8L4 1zM0 9h8l-4 4z" fill="#555"/></svg></i></span>
    <span class="lb9">Rotation</span>
    <span class="inp drop">0,0 °<i class="spin"><svg class="sp" viewBox="0 0 8 14"><path d="M0 5h8L4 1zM0 9h8l-4 4z" fill="#555"/></svg></i></span>
    <i class="cb cb2"><svg class="ck"><use href="#chk"/></svg></i>
    <span>Render</span>
    <svg class="sico" viewBox="0 0 16 16"><circle cx="8" cy="8" r="6.500" fill="#ccc" stroke="#777"/><path d="M1.500 8h13M8 1.500v13M3 4.500h10M3 11.500h10M8 1.500c-4 4-4 9 0 13M8 1.500c4 4 4 9 0 13" fill="none" stroke="#777" stroke-width=".8"/></svg>
    <span>EPSG:4326</span>
    <svg class="sico" viewBox="0 0 16 16"><path d="M1 7c0-4 3-6 7-6s7 2 7 6-3 6-7 6H6l-3 2 .5-3C2 11 1 9 1 7z" fill="#555"/><path d="M5 7h1M8 7h1M11 7h1" stroke="#fff" stroke-width="1.500"/></svg>
  </div>
</footer>

<div class="task">
  <div class="tk"><svg class="ti" viewBox="0 0 20 20"><path d="M0 3l8-1v7.500H0zM9 1.800 20 0v9.500H9zM0 10.500h8V18l-8-1zM9 10.500h11V20L9 18.200z" fill="#000"/></svg></div>
  <div class="tk"><svg class="ti" viewBox="0 0 20 24"><path d="M1 1v3h12V1M1 7h12v10H1zM1 23v-3h12v3M18 2v3M18 9v6M18 19v3" fill="none" stroke="#111" stroke-width="1.300"/></svg></div>
  <div class="tk app w51 u1"><svg class="ta" viewBox="0 0 28 28"><path d="M1 2h11l2 3h13v4H1z" fill="#e3ac2f"/><path d="M1 8h26v17H1z" fill="#fcd96a"/><path d="M8 14h13v12h-4v-7h-5v7H8z" fill="#2b8fd8"/></svg><i class="ub ub1"></i></div>
  <div class="tk app w51 ml11"><svg class="ta" viewBox="0 0 28 28"><rect x="1" y="1" width="26" height="26" fill="#49021f" stroke="#ee3d8f" stroke-width="1.600"/><text x="14" y="20" class="idt">Id</text></svg><i class="ub"></i></div>
  <div class="tk app w51 ml11"><svg class="ta" viewBox="0 0 28 28"><circle cx="14" cy="14" r="13.500" fill="#e0452f"/><path d="M14 14 2.300 7.300A13.500 13.500 0 0 0 14 27.500z" fill="#2f9e4e"/><path d="M14 14v13.500A13.500 13.500 0 0 0 25.700 7.300z" fill="#fbc938"/><circle cx="14" cy="14" r="6.500" fill="#fff"/><circle cx="14" cy="14" r="5" fill="#4f8ae8"/></svg><i class="ub"></i></div>
  <div class="tk app qa"><svg class="ta" viewBox="0 0 24 24"><use href="#qgis"/></svg><i class="ub"></i></div>
  <div class="tray">
    <svg class="tic" viewBox="0 0 16 16"><path d="m2 11 6-6 6 6" fill="none" stroke="#111" stroke-width="1.200"/></svg>
    <svg class="tic" viewBox="0 0 18 16"><rect x="2" y="4" width="15" height="10" fill="#111"/><path d="M0 4h4M1 0v4M3.500 0v4" stroke="#111"/></svg>
    <svg class="tic" viewBox="0 0 16 16"><path d="M2 14a10 10 0 0 1 12-12M5 14a6 6 0 0 1 7-7M8 14a3 3 0 0 1 3-3" fill="none" stroke="#777" stroke-width="1.100"/><circle cx="5" cy="13.500" r="1.400" fill="#111"/></svg>
    <svg class="tic" viewBox="0 0 16 16"><path d="M1 6h2l3-3v11l-3-3H1z" fill="none" stroke="#111"/><path d="m10 6 5 5M15 6l-5 5" stroke="#111"/></svg>
    <div class="clock"><span>11:53</span><span>6-11-2019</span></div>
    <div class="notif"><svg class="nic" viewBox="0 0 28 30"><path d="M2 3h18v18h-8l-4 4v-4H2z" fill="#000"/><path d="M6 8h10M6 12h10M6 16h10" stroke="#fff" stroke-width="1.500"/><circle cx="19" cy="21" r="7.500" fill="#d0d0d0" stroke="#333"/><text x="19" y="25" class="nn">1</text></svg></div>
  </div>
</div>
</body>
</html>
```

FILE: styles.css
```css
* { box-sizing: border-box; }
html, body { margin: 0; padding: 0; }
body {
  width: 1920px; height: 1080px; overflow: hidden; background: #f0f0f0;
  font-family: "Open Sans", "Noto Sans", sans-serif; font-size: 11.2px; color: #111;
  display: flex; flex-direction: column; filter: blur(.3px);
}
.defs { display: none; }

.title { height: 23px; background: #fff; display: flex; align-items: center; padding-left: 2px; font-size: 11.4px; color: #222; }
.logo { width: 18px; height: 18px; margin-right: 4px; }
.winbtns { margin-left: auto; display: flex; margin-bottom: 2px; }
.wb { width: 12px; height: 12px; }
.winbtns .wb:nth-child(1) { margin-right: 34px; }
.winbtns .wb:nth-child(2) { margin-right: 33px; }
.winbtns .wb:nth-child(3) { margin-right: 19px; }

.menu { height: 19px; background: #f0f0f0; display: flex; gap: 13.65px; padding-left: 10px; align-items: center; font-size: 11.3px; border-bottom: 1px solid #dcdcdc; }

.tb { height: 39px; flex: none; display: flex; align-items: center; background: linear-gradient(#fafafa, #f0f0f0); border-bottom: 1px solid #c4c4c4; }
.tb3 { height: 38px; border-bottom: 2px solid #c8c8c8; }
.b, .ar { font-weight: normal; display: flex; align-items: center; justify-content: center; flex: none; }
.b { width: 33px; height: 33px; }
.ar { width: 12px; height: 33px; }
.act { background: #dedede; border: 1px solid #b0b0b0; border-radius: 3px; }
.i { width: 24px; height: 24px; }
.vis { overflow: visible; }
.a { width: 8px; height: 6px; }
.dim { opacity: .35; }
.dis .i { filter: grayscale(1); opacity: .33; }
.h { width: 16px; height: 24px; flex: none; background: radial-gradient(circle, #aaa 0.7px, transparent 1px) center / 3px 3px repeat-y; }
.h0 { width: 12px; }

.oi { width: 23px; height: 23px; flex: none; margin-left: 6px; background: #e87a0d; border-radius: 2px; display: flex; }
.oic { width: 23px; height: 23px; }
.pdokin { width: 106px; height: 21px; flex: none; margin-left: 6px; background: #fff; border: 1px solid #c8c8c8; border-radius: 3px; font-size: 10.4px; line-height: 19px; padding-left: 2px; color: #777; white-space: nowrap; overflow: hidden; }
.oi2 { margin-left: 7px; }
.h3 { margin-left: 3px; width: 16px; }
.h3b { width: 27px; margin-left: -5px; }
.rast { width: 24px; height: 24px; flex: none; }

.main { height: 842px; flex: none; display: flex; }
.dock { width: 301px; flex: none; padding-right: 6px; display: flex; flex-direction: column; }
.dh { height: 19px; flex: none; display: flex; align-items: center; justify-content: space-between; padding: 0 3px 0 4px; }
.dbtns { display: flex; gap: 4px; margin-right: 1px; }
.db { width: 10px; height: 10px; }
.dt { height: 31px; flex: none; display: flex; align-items: center; gap: 8px; padding: 0 0 2px 8px; }
.di { width: 17px; height: 17px; flex: none; }
.list { height: 250px; flex: none; display: flex; background: #fff; border: 1px solid #c8c8c8; border-bottom: none; }
.rows { flex: 1; padding-left: 1px; overflow: hidden; }
.r { height: 17.8px; line-height: 17.8px; white-space: nowrap; }
.vs { width: 15px; flex: none; display: flex; flex-direction: column; border-left: 1px solid #dcdcdc; background: #f2f2f2; }
.sb { height: 14px; flex: none; display: flex; align-items: center; justify-content: center; background: #fafafa; }
.thumb { height: 178px; background: #cdcdcd; flex: none; }
.track { flex: 1; background: #f4f4f4; }
.hs { height: 15px; flex: none; display: flex; background: #f5f5f5; border: 1px solid #c8c8c8; }
.sb2 { width: 14px; flex: none; display: flex; align-items: center; justify-content: center; }
.a2 { width: 6px; height: 8px; }
.hthumb { width: 35px; background: #cdcdcd; flex: none; }
.htrack { flex: 1; }
.corner { width: 14px; flex: none; background: #f0f0f0; border-left: 1px solid #ddd; }
.split { height: 5px; flex: none; display: flex; justify-content: center; align-items: center; }
.gr { width: 16px; height: 2px; background: radial-gradient(circle, #aaa .7px, transparent 1px) 0 0 / 3px 2px repeat-x; }
.dh2 { height: 20px; }
.dt2 { height: 29px; padding-bottom: 1px; gap: 8.4px; }
.dex { display: flex; align-items: center; width: 27.6px; flex: none; }
.tree { flex: 1; background: #fff; border: 1px solid #c8c8c8; border-bottom: none; padding-top: 1.5px; }
.tr { height: 17.8px; display: flex; align-items: center; white-space: nowrap; }
.tw { width: 17px; height: 14px; flex: none; margin-left: 3px; }
.top .cb { margin-left: 3px; }
.cb { width: 13px; height: 13px; flex: none; background: #fff; border: 1px solid #d0d0d0; display: block; }
.ck { width: 11px; height: 11px; display: block; }
.li { width: 16px; height: 16px; margin-left: 6px; flex: none; }
.nm { margin-left: 6px; font-weight: 700; }
.dimrow .nm { color: #999; font-style: italic; }
.chip { width: 14px; height: 10px; margin-left: auto; margin-right: 3px; }
.sel { background: #0f7fd8; }
.sel .nm { color: #e6f3ff; text-decoration: underline; }
.leg { padding-left: 43px; }
.sw { width: 16px; height: 16px; margin-left: 7px; margin-right: 6px; border: 1px solid #98a3ad; flex: none; }
.s1 { background: #f7fbff; } .s2 { background: #d2e3f3; } .s3 { background: #9ac8e0; }
.s4 { background: #519dd0; } .s5 { background: #1d6bb1; } .s6 { background: #0a3068; }

.canvas { flex: 1; background: #fff; border: 1px solid #bcbcbc; min-width: 0; }
.map { width: 100%; height: 100%; display: block; }
.jag { filter: url(#jag); }
.map polygon, .map polyline { vector-effect: non-scaling-stroke; stroke-linejoin: round; }
.ln { fill: none; stroke: #3c3234; stroke-width: 1.900; }
.f1, .f3, .f4, .f5, .f6 { stroke: #3c3234; stroke-width: 1.900; }
.f1 { fill: #fefefc; } .f2 { fill: #d2e3f3; } .f3 { fill: #9ac8e0; } .f4 { fill: #519dd0; }
.f5 { fill: #1d6bb1; stroke: #5a2530; } .f6 { fill: #0a3068; stroke: #6b1226; stroke-width: 1.500; }

.status { height: 28px; flex: none; display: flex; align-items: center; padding-left: 4px; background: #f0f0f0; font-size: 10.8px; }
.loc { width: 199px; height: 21px; flex: none; display: flex; align-items: center; gap: 7px; padding-left: 8px; background: #fff; border: 1px solid #c8c8c8; border-radius: 3px; color: #777; }
.srch { width: 13px; height: 13px; }
.msg { margin-left: 9px; color: #111; }
.sr { margin-left: auto; margin-right: 4px; display: grid; grid-template-columns: 57px 72px 32px 29px 81px 32px 48px 87px 60px 83px 26px 47px 24px 69px 23px; align-items: center; }
.inp { height: 21px; line-height: 19px; background: #fff; border: 1px solid #c8c8c8; border-radius: 2px; padding-left: 4px; white-space: nowrap; overflow: hidden; }
.drop { display: flex; justify-content: space-between; }
.dd { width: 21px; border-left: 1px solid #ccc; display: flex; align-items: center; justify-content: center; background: #f8f8f8; }
.spin { width: 14px; display: flex; align-items: center; justify-content: center; }
.sp { width: 8px; height: 14px; }
.sico { width: 16px; height: 16px; justify-self: center; }
.sleft { justify-self: start; margin-left: 4px; }
.lb9 { padding-left: 9px; }
.cb2 { justify-self: center; }

.task { height: 52px; flex: none; display: flex; background: #d1d1d1; border-top: 1px solid #111; }
.tk { width: 60px; height: 51px; flex: none; display: flex; align-items: center; justify-content: center; position: relative; }
.ti { width: 20px; height: 22px; }
.ta { width: 28px; height: 28px; }
.app .ta { margin-right: 2px; }
.qa .ta { margin-right: 4px; }
.w51 { width: 51px; }
.u1 { margin-left: 9px; }
.ml11 { margin-left: 11px; }
.qa { width: 65px; height: 46px; margin-left: 13px; background: #bdbdbd; }
.ub { position: absolute; left: 0; right: 0; bottom: 0; height: 3px; background: #444; }
.qa .ub { left: 5px; right: 9px; bottom: -5px; }
.ub1 { background: linear-gradient(90deg, #444 78%, #888 78%); }
.tray { margin-left: auto; margin-right: 20px; display: grid; grid-template-columns: 30px 30px 32px 24px 92px 42px; align-items: center; justify-items: center; }
.tic { width: 16px; height: 16px; }
.clock { display: flex; flex-direction: column; align-items: center; gap: 6px; font-size: 14px; line-height: 18px; color: #222; }
.notif { margin-left: 6px; }
.nic { width: 28px; height: 30px; display: block; }

.abc { font: 700 9px "Liberation Sans", sans-serif; text-anchor: middle; fill: #111; }
.agr { fill: #888; }
.stya { font: 13px "Open Sans", sans-serif; text-anchor: middle; fill: #444; }
.one { font: 700 7px "Liberation Sans", sans-serif; text-anchor: middle; fill: #777; }
.info { font: italic 700 13px "Liberation Serif", serif; text-anchor: middle; fill: #fff; }
.eps { font: 400 26px "Liberation Serif", serif; text-anchor: middle; fill: #5a2f80; }
.eps2 { font-size: 18px; fill: #555; }
.tt { font: 700 15px "Liberation Serif", serif; text-anchor: middle; fill: #333; }
.help { font: 700 13px "Liberation Sans", sans-serif; text-anchor: middle; fill: #dfeaf6; }
.pdok { font: 700 6.500px "Liberation Sans", sans-serif; text-anchor: middle; fill: #fff; }
.idt { font: 15px "Liberation Sans", sans-serif; text-anchor: middle; fill: #ee3d8f; }
.nn { font: 11px "Open Sans", sans-serif; text-anchor: middle; fill: #111; }
```
